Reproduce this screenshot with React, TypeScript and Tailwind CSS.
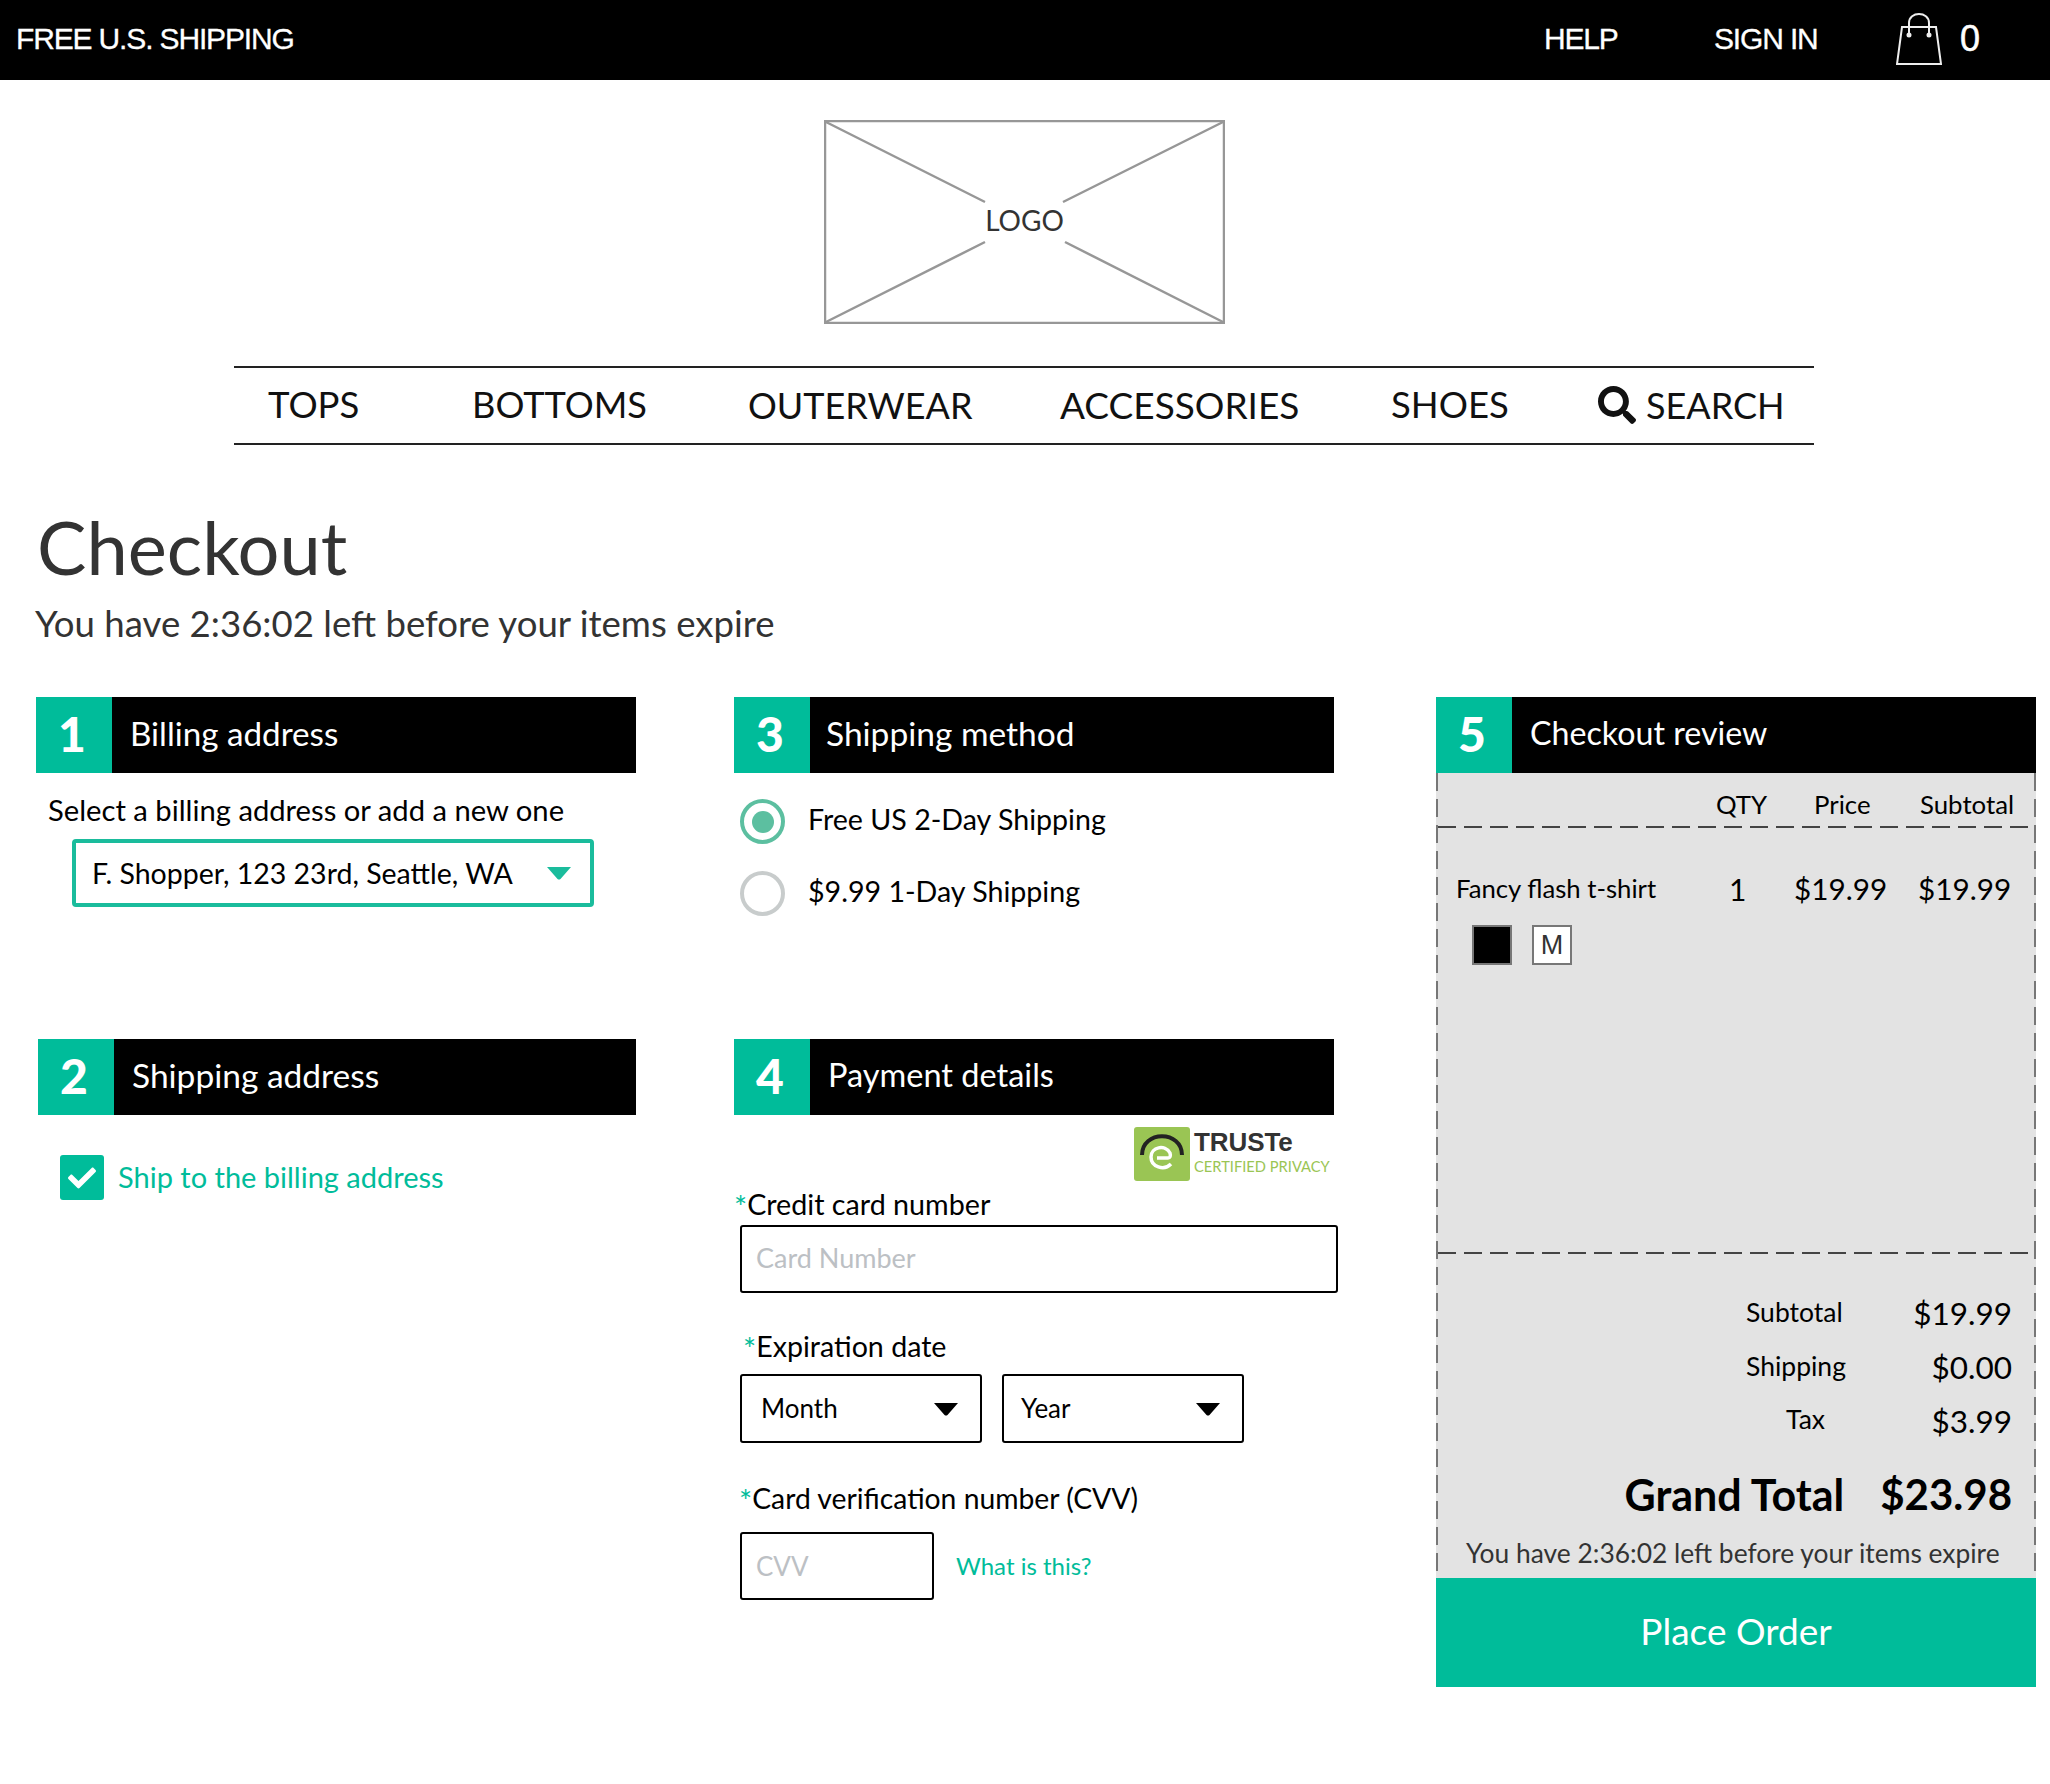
import React from "react";
import { FaSearch, FaCheck } from "react-icons/fa";

const teal = "bg-[#00bc9a]";

function Step({ n, title, pl = "pl-[18px]", size = "text-[33px]" }: { n: string; title: string; pl?: string; size?: string }) {
  return (
    <div className="flex h-[76px] bg-black text-white">
      <div className={`${teal} flex w-[76px] shrink-0 items-center justify-center pb-[2px] pr-[4px] text-[48px] font-black leading-none`}>{n}</div>
      <div className={`${pl} flex items-center pb-[3px] ${size} leading-none`}>{title}</div>
    </div>
  );
}

function Caret({ color = "#000" }: { color?: string }) {
  return (
    <svg width="26" height="14" viewBox="0 0 26 14" className="shrink-0">
      <path d="M1 1 H25 L14.5 13 Q13 14 11.5 13 Z" fill={color} />
    </svg>
  );
}

function Star() {
  return <span className="inline-block translate-y-[3px] text-[31px] leading-[0] text-[#00bc9a]">*</span>;
}

function Bag() {
  return (
    <svg width="46" height="54" viewBox="0 0 46 54" fill="none" stroke="#eee" strokeWidth="2">
      <path d="M6 15 H40 L45 52 H1 Z" />
      <path d="M13 22 V11 C13 -1 33 -1 33 11 V22" />
      <circle cx="13" cy="23" r="1.5" fill="#eee" />
      <circle cx="33" cy="23" r="1.5" fill="#eee" />
    </svg>
  );
}

function LogoBox() {
  return (
    <div className="relative ml-[824px] mt-[40px] h-[204px] w-[401px]">
      <svg width="401" height="204" viewBox="0 0 401 204" className="block">
        <rect x="1" y="1" width="399" height="202" fill="#fff" stroke="#979797" strokeWidth="2.5" />
        <path d="M2 2 L161 82 M399 2 L239 82 M2 202 L161 122 M399 202 L241 122" stroke="#979797" strokeWidth="2.5" />
      </svg>
      <div className="absolute inset-0 flex items-center justify-center pb-[5px] text-[28px] leading-none text-[#333]">LOGO</div>
    </div>
  );
}

function Truste() {
  return (
    <div className="flex h-[54px] w-[197px] items-center">
      <div className="flex h-[54px] w-[56px] shrink-0 items-center justify-center rounded-[3px] bg-[#9ac554]">
        <svg width="46" height="42" viewBox="0 0 46 42" fill="none">
          <path d="M3 22 C3 -3 43 -3 43 22" stroke="#222" strokeWidth="4" />
          <path d="M32 31 C25 38 12 34 12 24 C12 14 26 11 31 20 C32 23 31 25 29 25 H18" stroke="#fff" strokeWidth="3.5" />
        </svg>
      </div>
      <div className="ml-[4px] flex flex-col pb-[6px]">
        <span className="text-[26px] font-bold leading-[30px] tracking-[-0.1px] text-[#333] [font-family:'Liberation_Sans',sans-serif]">TRUSTe</span>
        <span className="whitespace-nowrap text-[14.7px] leading-[18px] text-[#9ac554]">CERTIFIED PRIVACY</span>
      </div>
    </div>
  );
}

const dashH = "h-[2px] shrink-0 bg-[repeating-linear-gradient(90deg,#444_0,#444_18px,transparent_18px,transparent_26px)]";
const dashV = "w-[2px] shrink-0 bg-[repeating-linear-gradient(180deg,#777_0,#777_18px,transparent_18px,transparent_26px)]";

export default function App() {
  return (
    <div className="h-[1784px] w-[2050px] overflow-hidden bg-white text-black [font-family:Lato,'Noto_Sans',sans-serif]">
      <header className="flex h-[80px] items-center bg-black text-white [font-family:'Liberation_Sans',Arial,sans-serif]">
        <span className="ml-[16px] w-[278px] whitespace-nowrap pb-[3px] text-[30px] leading-none tracking-[-1.15px] [-webkit-text-stroke:0.3px_white]">FREE U.S. SHIPPING</span>
        <span className="ml-[1250px] w-[73px] pb-[3px] text-[30px] leading-none tracking-[-1.2px] [-webkit-text-stroke:0.3px_white]">HELP</span>
        <span className="ml-[97px] w-[105px] whitespace-nowrap pb-[3px] text-[30px] leading-none tracking-[-1.15px] [-webkit-text-stroke:0.3px_white]">SIGN IN</span>
        <span className="ml-[77px] mt-[-3px]"><Bag /></span>
        <span className="ml-[18px] pb-[2px] text-[36px] leading-none [-webkit-text-stroke:0.5px_white]">0</span>
      </header>

      <LogoBox />

      <nav className="ml-[234px] mt-[42px] flex h-[79px] w-[1580px] items-center border-y-2 border-[#222] pb-[2px] pl-[34px] text-[36.5px] leading-none text-[#111]">
        <span className="w-[204px]">TOPS</span>
        <span className="w-[276px] text-[36.2px]">BOTTOMS</span>
        <span className="w-[312px] text-[36px]">OUTERWEAR</span>
        <span className="w-[331px] text-[37px]">ACCESSORIES</span>
        <span className="w-[207px]">SHOES</span>
        <span className="flex items-center text-[36px]">
          <FaSearch className="mr-[10px] text-[38px]" />
          SEARCH
        </span>
      </nav>

      <h1 className="ml-[37px] mt-[57px] text-[74px] leading-[90px] text-[#333]">Checkout</h1>
      <p className="ml-[35px] mt-[9px] text-[36.6px] leading-[44px] text-[#333]">You have 2:36:02 left before your items expire</p>

      <main className="mt-[52px] flex pl-[36px]">
        <div className="w-[600px]">
          <section className="h-[342px]">
            <Step n="1" title="Billing address" size="text-[33.2px]" />
            <p className="ml-[12px] mt-[19px] text-[29.2px] leading-[36px]">Select a billing address or add a new one</p>
            <div className="ml-[36px] mt-[11px] flex h-[68px] w-[522px] items-center justify-between rounded-[4px] border-[4px] border-[#1abc9c] pl-[16px] pr-[18px] text-[28.5px]">
              <span>F. Shopper, 123 23rd, Seattle, WA</span>
              <Caret color="#1abc9c" />
            </div>
          </section>
          <section className="ml-[2px]">
            <Step n="2" title="Shipping address" size="text-[33.5px]" />
            <label className="ml-[22px] mt-[40px] flex items-center">
              <span className={`${teal} flex h-[45px] w-[44px] items-center justify-center rounded-[3px] text-[28px] text-white`}><FaCheck /></span>
              <span className="ml-[14px] pb-[2px] text-[29px] leading-none text-[#00bc9a]">Ship to the billing address</span>
            </label>
          </section>
        </div>

        <div className="ml-[98px] w-[600px]">
          <section className="h-[342px]">
            <Step n="3" title="Shipping method" pl="pl-[16px]" size="text-[33.5px]" />
            <div className="ml-[6px] mt-[26px] flex items-center text-[28.6px] leading-none">
              <span className="flex h-[45px] w-[45px] items-center justify-center rounded-full border-[4px] border-[#5cbfa0]">
                <span className="h-[22px] w-[22px] rounded-full bg-[#5cbfa0]" />
              </span>
              <span className="ml-[23px] pb-[4px]">Free US 2-Day Shipping</span>
            </div>
            <div className="ml-[6px] mt-[27px] flex items-center text-[28.6px] leading-none">
              <span className="h-[45px] w-[45px] rounded-full border-[4px] border-[#c8cccc]" />
              <span className="ml-[23px] pb-[5px]">$9.99 1-Day Shipping</span>
            </div>
          </section>
          <section>
            <Step n="4" title="Payment details" size="text-[32.5px]" />
            <div className="mt-[12px] flex justify-end pr-[3px]"><Truste /></div>
            <div className="mt-[4px] text-[28.7px] leading-[38px]"><Star />Credit card number</div>
            <div className="ml-[6px] mt-[2px] flex h-[68px] w-[598px] items-center rounded-[3px] border-[2px] border-black pb-[2px] pl-[14px] text-[27px] text-[#bcc0c4]">Card Number</div>
            <div className="ml-[9px] mt-[34px] text-[28.6px] leading-[38px]"><Star />Expiration date</div>
            <div className="ml-[6px] mt-[9px] flex gap-[20px] text-[26px]">
              <div className="flex h-[69px] w-[242px] items-center justify-between rounded-[3px] border-[2px] border-black pl-[19px] pr-[21px]">Month<Caret /></div>
              <div className="flex h-[69px] w-[242px] items-center justify-between rounded-[3px] border-[2px] border-black pl-[17px] pr-[21px]">Year<Caret /></div>
            </div>
            <div className="ml-[5px] mt-[36px] text-[28.3px] leading-[38px]"><Star />Card verification number (CVV)</div>
            <div className="ml-[6px] mt-[15px] flex items-center">
              <div className="flex h-[68px] w-[194px] items-center rounded-[3px] border-[2px] border-black pl-[14px] text-[26px] text-[#bcc0c4]">CVV</div>
              <span className="ml-[22px] text-[24px] text-[#00bc9a]">What is this?</span>
            </div>
          </section>
        </div>

        <section className="ml-[102px] w-[600px]">
          <Step n="5" title="Checkout review" size="text-[32.2px]" />
          <div className="flex h-[805px] bg-[#e3e3e3]">
            <div className={dashV} />
            <div className="flex min-w-0 flex-1 flex-col">
              <div className="flex h-[53px] shrink-0 items-center pt-[10px] text-[25.8px] leading-none">
                <span className="ml-[278px] w-[98px]">QTY</span>
                <span className="w-[106px]">Price</span>
                <span>Subtotal</span>
              </div>
              <div className={dashH} />
              <div className="h-[424px] shrink-0">
                <div className="mt-[46px] flex items-center leading-none">
                  <span className="ml-[18px] w-[273px] text-[25.7px]">Fancy flash t-shirt</span>
                  <span className="w-[65px] text-[30px]">1</span>
                  <span className="w-[124px] text-[29.7px]">$19.99</span>
                  <span className="text-[29.7px]">$19.99</span>
                </div>
                <div className="ml-[34px] mt-[21px] flex gap-[20px]">
                  <span className="h-[40px] w-[40px] border-[2px] border-[#777] bg-black" />
                  <span className="flex h-[40px] w-[40px] items-center justify-center border-[2px] border-[#777] bg-white text-[27px] leading-none text-[#333] [font-family:'Liberation_Sans',sans-serif]">M</span>
                </div>
              </div>
              <div className={dashH} />
              <div className="grid grid-cols-[auto_146px] justify-end pr-[22px] pt-[44px] text-[26.5px] leading-none">
                <span className="h-[54px] w-[120px] pt-[1px] text-left">Subtotal</span>
                <span className="h-[54px] text-right text-[31.5px]">$19.99</span>
                <span className="h-[54px] w-[120px] pt-[1px] text-left">Shipping</span>
                <span className="h-[54px] text-right text-[31.5px]">$0.00</span>
                <span className="h-[54px] w-[120px] pl-[40px] text-left">Tax</span>
                <span className="h-[54px] text-right text-[31.5px]">$3.99</span>
              </div>
              <div className="mt-[13px] flex justify-end pr-[22px] text-[43px] font-bold leading-none">
                <span>Grand Total</span>
                <span className="ml-[36px] text-[42px]">$23.98</span>
              </div>
              <p className="ml-[28px] mt-[24px] whitespace-nowrap text-[26.4px] leading-none text-[#333]">You have 2:36:02 left before your items expire</p>
            </div>
            <div className={dashV} />
          </div>
          <button className={`${teal} flex h-[109px] w-full items-center justify-center pb-[5px] text-[37px] leading-none text-white`}>Place Order</button>
        </section>
      </main>
    </div>
  );
}
